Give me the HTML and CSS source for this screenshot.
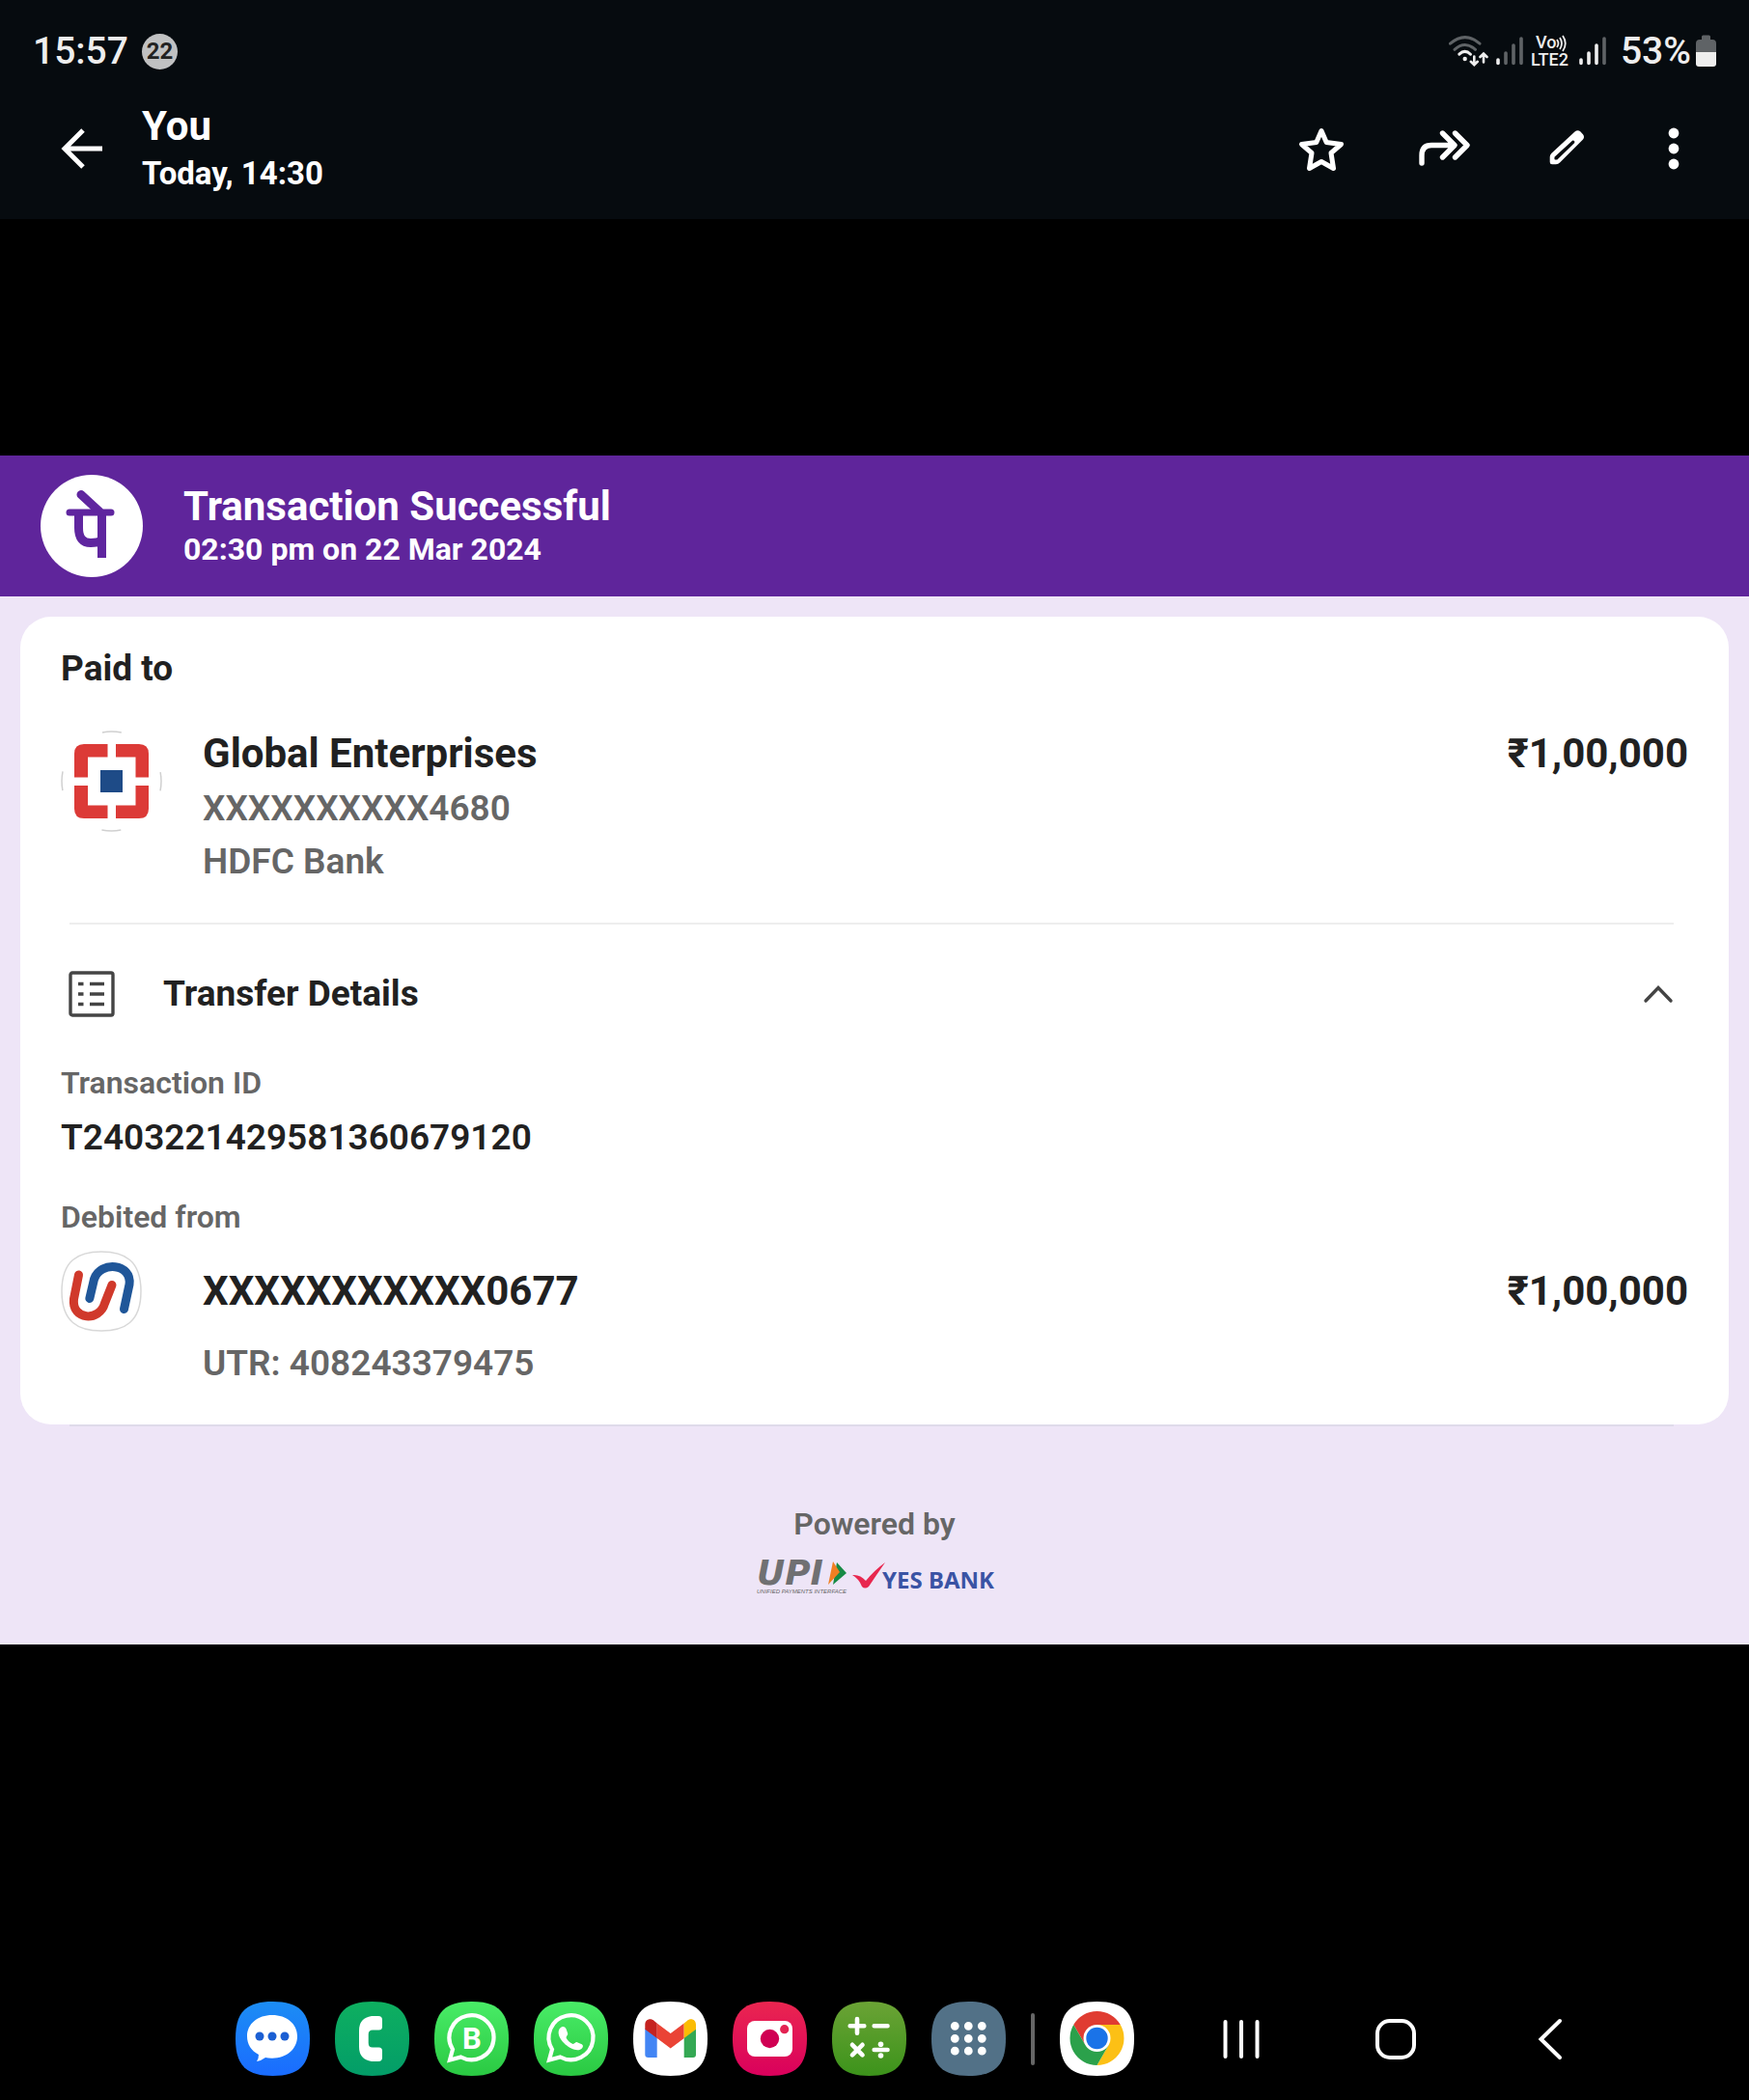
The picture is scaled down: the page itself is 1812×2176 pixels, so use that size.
FILE: index.html
```html
<!DOCTYPE html>
<html lang="en">
<head>
<meta charset="utf-8">
<meta name="viewport" content="width=device-width, initial-scale=1">
<title>You – Today, 14:30</title>
<link rel="stylesheet" href="styles.css">
</head>
<body>
<header class="top">
  <div class="status">
    <time class="clock">15:57</time>
    <span class="count">22</span>
    <div class="status-icons">
      <svg width="42" height="34" viewBox="0 0 42 34" fill="none" stroke-width="3" stroke-linecap="round">
        <path d="M2.5 9.2Q17.7-4 33 9.2M7 15.3Q17.7 5.7 28.500 15.3" stroke="#5f6366"/>
        <path d="M11.800 20.200Q17.700 14.500 23.500 20.200" stroke="#eee"/>
        <circle cx="17.700" cy="25" r="2.200" fill="#eee"/>
        <path d="M27.300 22.500V31M23.800 27.800L27.300 31.200L30.800 27.800M37 28.500V20M33.500 23L37 19.500L40.500 23" stroke="#eee" stroke-width="2.600"/>
      </svg>
      <svg width="28" height="34" viewBox="0 0 28 34" stroke-width="3.6" stroke-linecap="round">
        <path d="M2 26V29.500" stroke="#eee"/>
        <path d="M10 19V29.500M18 11V29.500M26 4V29.500" stroke="#5f6366"/>
      </svg>
      <svg width="42" height="44" viewBox="0 -5 42 44" class="volte">
        <text x="5" y="14">Vo</text>
        <text x="0" y="32">LTE2</text>
        <path d="M27 5Q30 9 27 13M30 3Q34 9 30 15M33 1Q38.500 9 33 17" fill="none" stroke="#eee" stroke-width="1.800"/>
      </svg>
      <svg width="28" height="34" viewBox="0 0 28 34" stroke-width="3.6" stroke-linecap="round">
        <path d="M2 26V29.500M10 19V29.500M18 11V29.500" stroke="#eee"/>
        <path d="M26 4V29.500" stroke="#5f6366"/>
      </svg>
      <span class="battery">
        53%
        <svg width="21" height="34" viewBox="0 0 21 34">
          <path d="M6 5V2Q6 .5 7.500 .5H13.500Q15 .5 15 2V5H17Q21 5 21 9V18H0V9Q0 5 4 5Z" fill="#5f6366"/>
          <path d="M0 18H21V30Q21 33 18 33H3Q0 33 0 30Z" fill="#eee"/>
        </svg>
      </span>
    </div>
  </div>
  <div class="appbar">
    <button class="back" aria-label="Back">
      <svg width="48" height="48" viewBox="0 0 48 48" fill="none" stroke="#fff" stroke-width="5"><path d="M45 24H7M25 5L6 24L25 43"/></svg>
    </button>
    <div class="sender">
      <h1 class="name">You</h1>
      <p class="when">Today, 14:30</p>
    </div>
    <button class="action" aria-label="Star">
      <svg width="52" height="52" viewBox="0 0 52 52" fill="none" stroke="#fff" stroke-width="5" stroke-linejoin="round"><path d="M26 7.500L31.200 19.500L46.500 21.500L36 30.500L38.500 46.500L26 39.500L13.500 46.500L16 30.500L5.500 21.500L20.800 19.500Z"/></svg>
    </button>
    <button class="action" aria-label="Forward">
      <svg width="56" height="52" viewBox="0 0 56 52" fill="none" stroke="#fff" stroke-width="5.4" stroke-linecap="round" stroke-linejoin="round"><path d="M5 41V33Q5 22.500 15 22.500H38M26.500 10L39 22.500L26.500 35M39.500 10L52 22.500L39.500 35"/></svg>
    </button>
    <button class="action" aria-label="Edit">
      <svg width="52" height="52" viewBox="0 0 52 52"><path d="M8.700 40V34.500Q8.700 32.500 10.200 31L34.500 8.500Q37.500 6 40.500 8.500L43 11.300Q45 14 43 16.500L19 40.500Q17.500 42.300 15 42.300H11Q8.700 42.300 8.700 40Z" fill="#fff"/><path d="M14.200 36.800V35L32.500 18.300Q34 18.300 33.500 19.800L16 36.800Z" fill="#060b0f" stroke="#060b0f" stroke-width="1.500" stroke-linejoin="round"/></svg>
    </button>
    <button class="action more" aria-label="More options">
      <svg width="12" height="52" viewBox="0 0 12 52" fill="#fff"><circle cx="6" cy="10" r="5.400"/><circle cx="6" cy="26" r="5.400"/><circle cx="6" cy="42" r="5.400"/></svg>
    </button>
  </div>
</header>

<main class="stage">
  <article class="receipt">
    <div class="banner">
      <svg width="106" height="106" viewBox="0 0 106 106">
        <circle cx="53" cy="53" r="53" fill="#fff"/>
        <g fill="none" stroke="#5f259f" stroke-width="9" stroke-linejoin="round">
          <path d="M63.500 39V86M39.500 40V55Q39.500 70.500 52 70.500Q59 70.500 64 68"/>
          <path d="M30 39H73" stroke-width="7" stroke-linecap="round"/>
          <path d="M42 20.500L61 38" stroke-linecap="round" stroke-width="9"/>
        </g>
      </svg>
      <div>
        <h2 class="banner-title">Transaction Successful</h2>
        <p class="banner-date">02:30 pm on 22 Mar 2024</p>
      </div>
    </div>
    <div class="receipt-body">
      <section class="card">
        <h3 class="section-title">Paid to</h3>
        <div class="party">
          <svg width="105" height="105" viewBox="0 0 105 105">
            <circle cx="52.500" cy="52.500" r="51.500" fill="none" stroke="#d0d0d0" stroke-width="1.500" stroke-dasharray="20 60.900" stroke-dashoffset="10"/>
            <path d="M24 14H48.500V27.500H28V48.500H14V24Q14 14 24 14ZM57 14H81Q91 14 91 24V48.500H77.500V27.500H57ZM14 57H28V77.500H48.500V91H24Q14 91 14 81ZM77.500 57H91V81Q91 91 81 91H57V77.500H77.500Z" fill="#dc3a37"/>
            <path d="M41 41H64V64H41Z" fill="#1e4b87"/>
          </svg>
          <div class="party-info">
            <p class="strong">Global Enterprises</p>
            <p class="muted">XXXXXXXXXX4680</p>
            <p class="muted">HDFC Bank</p>
          </div>
          <p class="strong amount">₹1,00,000</p>
        </div>
        <hr class="rule">
        <button class="toggle" aria-expanded="true">
          <svg width="48" height="48" viewBox="0 0 48 48" fill="none" stroke="#444" stroke-width="3.400"><rect x="2" y="2" width="44" height="44" rx="2"/><path d="M10 13.500H15.500M22 13.500H37M10 24H15.500M22 24H37M10 34.500H15.500M22 34.500H37"/></svg>
          <span class="toggle-label">Transfer Details</span>
          <svg width="32" height="20" viewBox="0 0 32 20" fill="none" stroke="#444" stroke-width="3.400" stroke-linecap="round"><path d="M3 17L16 3.500L29 17"/></svg>
        </button>
        <dl class="details">
          <dt class="label">Transaction ID</dt>
          <dd class="value">T2403221429581360679120</dd>
          <dt class="label">Debited from</dt>
          <dd class="debit">
            <svg width="84" height="84" viewBox="0 0 84 84" fill="none" stroke-width="9" stroke-linecap="round">
              <path d="M42 1C66 1 83 10 83 42S66 83 42 83 1 74 1 42 18 1 42 1Z" stroke="#d8d8d8" stroke-width="1.500"/>
              <path d="M18.500 25L13.500 50C11 72 40 74 45.500 54.500L53 35.500" stroke="#d0392b"/>
              <path d="M29.800 49.500L34.500 29.500C41 10 74 13 71 35L65.500 60.500" stroke="#1f5699"/>
            </svg>
            <span class="strong">XXXXXXXXXXX0677</span>
            <span class="strong amount">₹1,00,000</span>
            <span class="muted utr">UTR: 408243379475</span>
          </dd>
        </dl>
      </section>
      <hr class="card-edge">
      <footer class="powered">
        <p class="label">Powered by</p>
        <svg class="partners" width="246" height="42" viewBox="0 -4 246 42">
          <text class="upi" x="1" y="25">UPI</text>
          <path d="M84 2L94 13L80 25Z" fill="#178a45"/>
          <path d="M80 1L87 12L75 25Z" fill="#f07f23"/>
          <text class="upi-note" x="1" y="34">UNIFIED PAYMENTS INTERFACE</text>
          <path d="M100 15Q108 14 114 21Q123 10 134 2Q125 15 117 27Q113 30 110 27Q107 19 100 15Z" fill="#e8274f"/>
          <text class="yes" x="131" y="29">YES BANK</text>
        </svg>
      </footer>
    </div>
  </article>
</main>

<footer class="dock">
  <nav class="apps" aria-label="Apps">
    <button class="app" aria-label="Messages"><svg viewBox="0 0 77 77"><defs><linearGradient id="blue" x2="0" y2="1"><stop stop-color="#1c8df4"/><stop offset="1" stop-color="#1a6cff"/></linearGradient><linearGradient id="teal" x2="0" y2="1"><stop stop-color="#0eaf60"/><stop offset="1" stop-color="#039d68"/></linearGradient><linearGradient id="lime" x2="0" y2="1"><stop stop-color="#49ec67"/><stop offset="1" stop-color="#2ac942"/></linearGradient><linearGradient id="pink" x2="0" y2="1"><stop stop-color="#ea2650"/><stop offset="1" stop-color="#da005c"/></linearGradient><linearGradient id="leaf" x2="0" y2="1"><stop stop-color="#6ba335"/><stop offset="1" stop-color="#3c931b"/></linearGradient></defs>
      <path fill="url(#blue)" d="M38.500 0C66 0 77 11 77 38.500S66 77 38.500 77 0 66 0 38.500 11 0 38.500 0Z"/>
      <path fill="#fff" d="M38 14C53 14 64 23 64 36S53 58.700 38 58.700Q34 58.700 31 58Q27 61 22 62Q24 59 24 55C16 51 12 44 12 36C12 23 23 14 38 14Z"/><g fill="#1b5fd3"><circle cx="25" cy="36" r="4.500"/><circle cx="38" cy="36" r="4.500"/><circle cx="51" cy="36" r="4.500"/></g></svg></button>
    <button class="app" aria-label="Phone"><svg viewBox="0 0 77 77"><path fill="url(#teal)" d="M38.500 0C66 0 77 11 77 38.500S66 77 38.500 77 0 66 0 38.500 11 0 38.500 0Z"/>
      <path fill="#fff" d="M38 15H45Q49 15 49 19V26Q49 29.500 45.500 29.500H39Q34.700 29.500 34.700 34V43Q34.700 47.500 39 47.500H45.500Q49 47.500 49 51V58Q49 62 45 62H38Q25 60 25 47V30Q25 17 38 15Z"/></svg></button>
    <button class="app" aria-label="WhatsApp Business"><svg viewBox="0 0 77 77"><path fill="url(#lime)" d="M38.500 0C66 0 77 11 77 38.500S66 77 38.500 77 0 66 0 38.500 11 0 38.500 0Z"/>
      <path d="M19 49.500L16 60.500L27.500 57.500A23 23 0 1 0 19 49.500Z" fill="none" stroke="#fff" stroke-width="4.200"/><text class="badge-b" x="39" y="49">B</text></svg></button>
    <button class="app" aria-label="WhatsApp"><svg viewBox="0 0 77 77"><path fill="url(#lime)" d="M38.500 0C66 0 77 11 77 38.500S66 77 38.500 77 0 66 0 38.500 11 0 38.500 0Z"/>
      <path d="M19 49.500L16 60.500L27.500 57.500A23 23 0 1 0 19 49.500Z" fill="none" stroke="#fff" stroke-width="4.200"/><path fill="#fff" d="M29 26.200c2-.8 3.800 0 4.600 2.400l1.600 4.400c.6 1.800-2 3-1.600 4.600 1 2.600 4.600 5.800 7 6.400 1.600.2 2.600-2.400 4.400-1.800l4.800 2c1.800 1 1.400 3.400-.4 4.800-7 5-23-6.500-23.800-16.400-.2-3 1.400-5.600 3.400-6.400z"/></svg></button>
    <button class="app" aria-label="Gmail"><svg viewBox="0 0 77 77"><path fill="#fff" d="M38.500 0C66 0 77 11 77 38.500S66 77 38.500 77 0 66 0 38.500 11 0 38.500 0Z"/>
      <path fill="#4285f4" d="M12.300 28L24.700 37V58H15.500Q12.300 58 12.300 55Z"/><path fill="#34a853" d="M65 28L52.700 37V58H62Q65 58 65 55Z"/><path fill="#ea4335" d="M24.700 22.500L38.700 33L52.700 22.500V38L38.700 48.500L24.700 38Z"/><path fill="#c5221f" d="M12.300 24C12.300 18.500 18 16.500 22 20.300L24.700 22.500V38L12.300 28.700Z"/><path fill="#fbbc04" d="M65 24C65 18.500 59.500 16.500 55.500 20.300L52.700 22.500V38L65 28.700Z"/></svg></button>
    <button class="app" aria-label="Camera"><svg viewBox="0 0 77 77"><path fill="url(#pink)" d="M38.500 0C66 0 77 11 77 38.500S66 77 38.500 77 0 66 0 38.500 11 0 38.500 0Z"/>
      <rect x="15" y="20" width="47" height="37" rx="8" fill="#fff"/><circle cx="38.500" cy="38.500" r="9.700" fill="#d00053"/><circle cx="53.700" cy="28.700" r="4.600" fill="#e32352"/></svg></button>
    <button class="app" aria-label="Calculator"><svg viewBox="0 0 77 77"><path fill="url(#leaf)" d="M38.500 0C66 0 77 11 77 38.500S66 77 38.500 77 0 66 0 38.500 11 0 38.500 0Z"/>
      <path d="M26 18V32.700M18.700 25.300H33.300M43.700 25.300H57.500M21 44.800L31.500 55.300M31.500 44.800L21 55.300M43.700 50H57.500" stroke="#fff" stroke-width="4.600" stroke-linecap="round"/><circle cx="50.500" cy="44.300" r="2.800" fill="#fff"/><circle cx="50.500" cy="56" r="2.800" fill="#fff"/></svg></button>
    <button class="app" aria-label="All apps"><svg viewBox="0 0 77 77"><path fill="#527187" d="M38.500 0C66 0 77 11 77 38.500S66 77 38.500 77 0 66 0 38.500 11 0 38.500 0Z"/>
      <path d="M24.300 25.300H24.310M38.300 25.300H38.310M52.300 25.300H52.310M24.300 38.300H24.310M38.300 38.300H38.310M52.300 38.300H52.310M24.300 51.200H24.310M38.300 51.200H38.310M52.300 51.200H52.310" stroke="#fff" stroke-width="8.800" stroke-linecap="round"/></svg></button>
    <span class="divider"></span>
    <button class="app" aria-label="Chrome"><svg viewBox="0 0 77 77"><path fill="#fff" d="M38.500 0C66 0 77 11 77 38.500S66 77 38.500 77 0 66 0 38.500 11 0 38.500 0Z"/>
      <path fill="#e03c31" d="M14.250 24A28 28 0 0 1 62.750 24H38.500L26.400 45Z"/><path fill="#fcc015" d="M62.750 24A28 28 0 0 1 38.500 66L50.600 45L38.500 24Z"/><path fill="#2ba14b" d="M38.500 66A28 28 0 0 1 14.250 24L26.400 45H50.600Z"/><circle cx="38.500" cy="38" r="14" fill="#fff"/><circle cx="38.500" cy="38" r="11.200" fill="#1a73e8"/></svg></button>
  </nav>
  <nav class="keys" aria-label="System">
    <button class="key" aria-label="Recents"><svg width="44" height="44" viewBox="0 0 44 44" stroke="#fff" stroke-width="4" stroke-linecap="round"><path d="M5.500 4V40M22 4V40M38.500 4V40"/></svg></button>
    <button class="key" aria-label="Home"><svg width="44" height="44" viewBox="0 0 44 44" fill="none" stroke="#fff" stroke-width="4"><rect x="3" y="3" width="38" height="38" rx="13"/></svg></button>
    <button class="key" aria-label="Go back"><svg width="44" height="44" viewBox="0 0 44 44" fill="none" stroke="#fff" stroke-width="4" stroke-linecap="round"><path d="M32 3L12.500 22L32 41"/></svg></button>
  </nav>
</footer>
</body>
</html>
```
FILE: styles.css
```css
* {
  box-sizing: border-box;
  margin: 0;
  padding: 0;
}

body {
  display: flex;
  flex-direction: column;
  min-height: 100vh;
  background: #000;
  color: #212121;
  font-family: Roboto, "Liberation Sans", sans-serif;
  font-weight: 500;
}

svg {
  display: block;
  flex: none;
}

button {
  border: 0;
  background: none;
  color: inherit;
  font: inherit;
  cursor: pointer;
}

/* Status bar and message header */
.top {
  padding-top: 29px;
  background: #060b0f;
  color: #fff;
}

.status {
  display: flex;
  align-items: center;
  padding: 0 34px;
  color: #eee;
  font-size: 39px;
  line-height: 48px;
}

.count {
  width: 37px;
  height: 37px;
  margin-left: 14px;
  border-radius: 50%;
  background: #c0c1c2;
  color: #222;
  font-size: 24px;
  font-weight: 700;
  line-height: 36px;
  text-align: center;
}

.status-icons {
  display: flex;
  align-items: center;
  gap: 8px;
  margin-left: auto;
}

.battery {
  display: flex;
  align-items: center;
  gap: 5px;
  margin-left: 7px;
}

.volte {
  overflow: visible;
  fill: #eee;
  font-size: 18px;
}

.appbar {
  display: flex;
  align-items: center;
  padding: 30px 30px 27px 61px;
}

.sender {
  flex: 1;
  display: grid;
  gap: 5px;
  margin-left: 38px;
}

.name {
  font-size: 42px;
  font-weight: 700;
  line-height: 48px;
}

.when {
  font-size: 33px;
  font-weight: 700;
  line-height: 40px;
}

.action {
  display: flex;
  justify-content: center;
  width: 127px;
}

.more {
  width: 96px;
}

/* Payment receipt */
.stage {
  flex: 1;
  display: grid;
  align-items: center;
}

.receipt {
  background: #eee5f7;
}

.banner {
  display: flex;
  align-items: center;
  gap: 42px;
  padding: 20px 42px;
  background: #5f259b;
  color: #fff;
}

.banner-title {
  font-size: 42px;
  font-weight: 700;
  line-height: 48px;
}

.banner-date {
  font-size: 32px;
  font-weight: 700;
  line-height: 40px;
}

.receipt-body {
  padding: 21px 21px 49px;
}

.card {
  padding: 32px 42px 41px;
  border-radius: 32px;
  background: #fff;
}

.section-title,
.muted,
.value,
.toggle-label {
  font-size: 37px;
  font-weight: 700;
  line-height: 44px;
}

.strong {
  font-size: 42px;
  font-weight: 700;
  line-height: 48px;
}

.muted,
.label {
  color: #666;
}

.muted,
.value {
  font-weight: 600;
}

.label {
  font-size: 32px;
  font-weight: 600;
  line-height: 40px;
}

.party {
  display: grid;
  grid-template-columns: 147px 1fr auto;
  align-items: start;
  margin-top: 42px;
}

.party-info {
  display: grid;
  gap: 11px;
}

.rule {
  height: 2px;
  margin: 41px 15px 0 9px;
  border: 0;
  background: #eee;
}

.toggle {
  display: flex;
  align-items: center;
  width: 100%;
  margin-top: 48px;
  padding: 0 15px 0 8px;
  text-align: left;
}

.toggle-label {
  flex: 1;
  margin-left: 50px;
}

.details {
  margin-top: 48px;
}

.value {
  margin: 15px 0 40px;
}

.debit {
  display: grid;
  grid-template-columns: 147px 1fr auto;
  row-gap: 11px;
  align-items: center;
  margin-top: 15px;
}

.utr {
  grid-column: 2;
}

.card-edge {
  height: 2px;
  margin: 0 57px 0 51px;
  border: 0;
  background: #dfdbea;
}

.powered {
  display: grid;
  gap: 14px;
  justify-items: center;
  padding-top: 81px;
}

.partners {
  overflow: visible;
}

.upi {
  fill: #707072;
  font: italic 700 36px "DejaVu Sans", sans-serif;
}

.upi-note {
  fill: #666;
  font: italic 400 6px "Liberation Sans", sans-serif;
}

.yes {
  fill: #3a53a4;
  font: 700 24px "Noto Sans", sans-serif;
}

/* Taskbar */
.dock {
  display: flex;
  align-items: flex-end;
  height: 227px;
  padding: 0 126px 25px 244px;
}

.apps {
  display: flex;
  align-items: center;
  gap: 26px;
}

.app {
  width: 77px;
  height: 77px;
}

.badge-b {
  fill: #fff;
  font-size: 31px;
  font-weight: 700;
  text-anchor: middle;
}

.divider {
  width: 4px;
  height: 54px;
  border-radius: 2px;
  background: #666;
}

.keys {
  display: flex;
  margin-left: auto;
}

.key {
  display: grid;
  place-items: center;
  width: 160px;
  height: 77px;
}
```
